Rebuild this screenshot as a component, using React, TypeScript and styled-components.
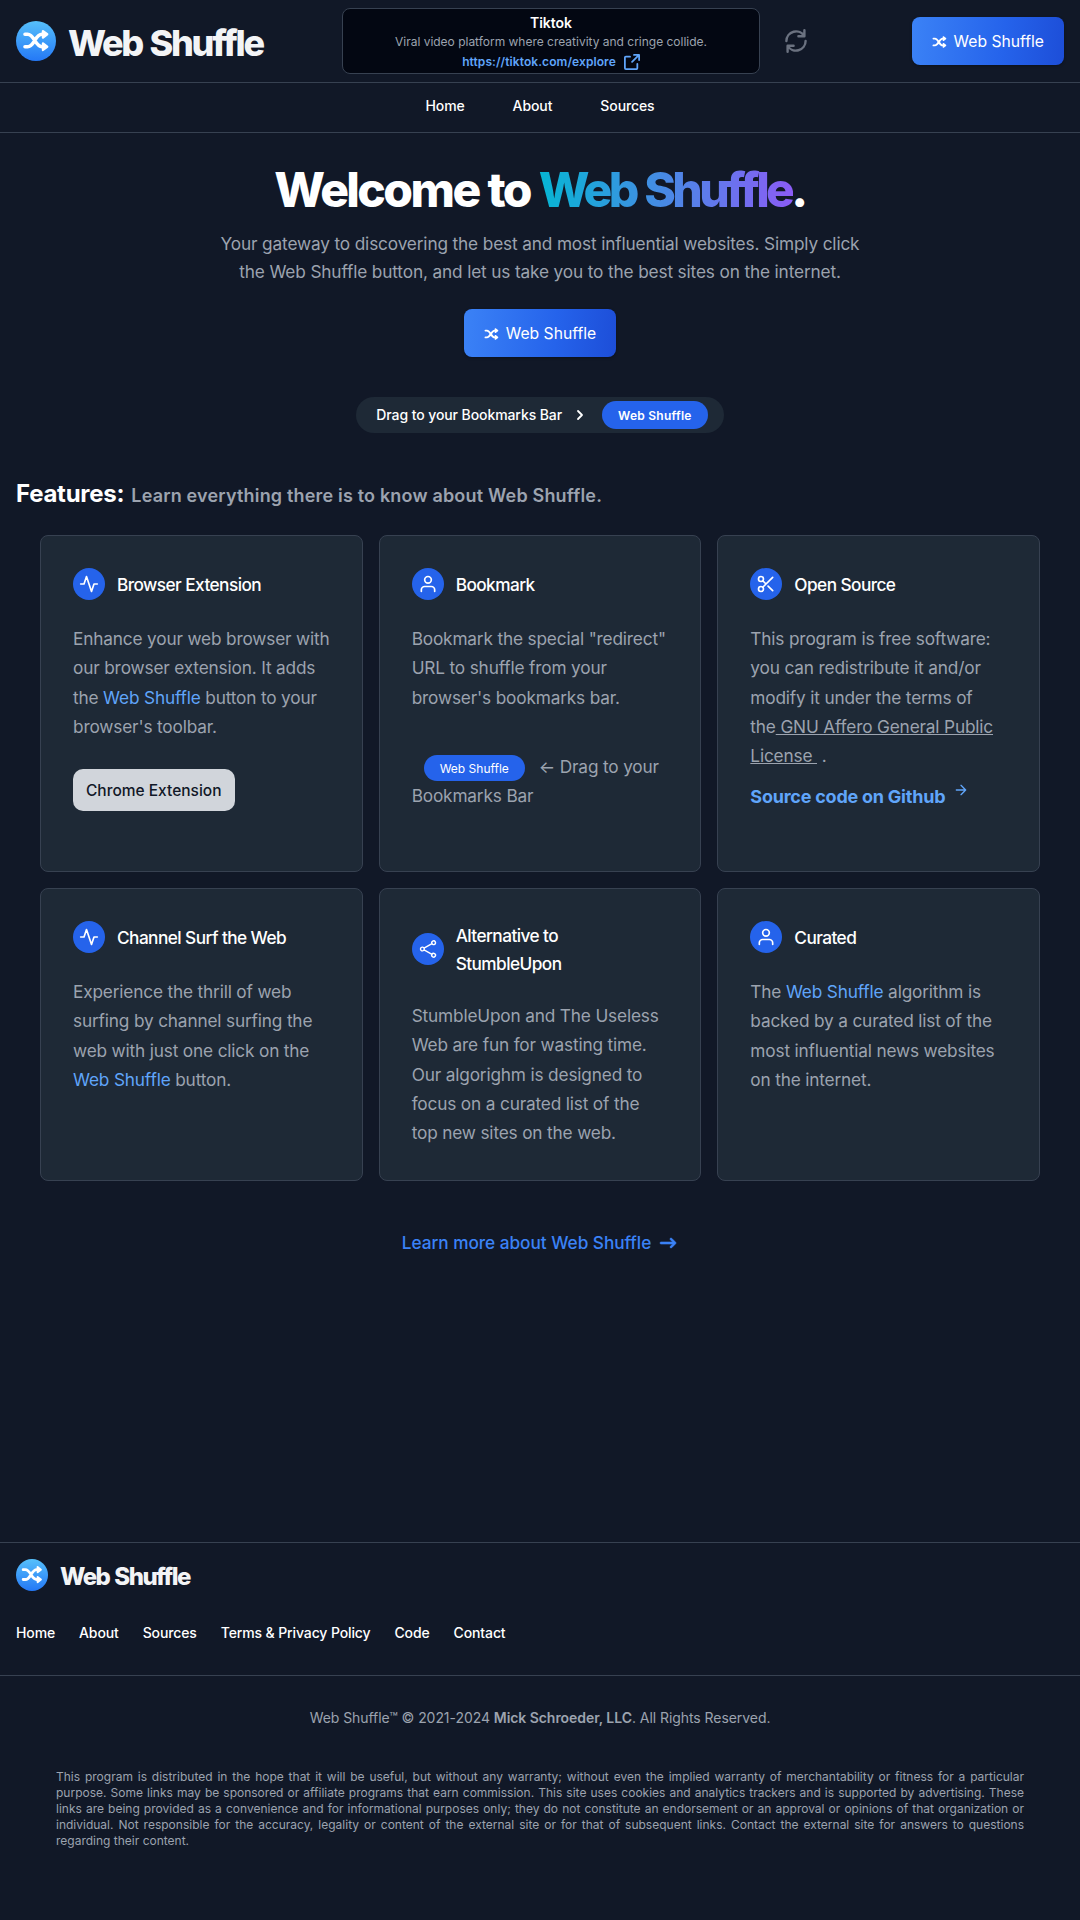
import React from "react";
import styled, { createGlobalStyle } from "styled-components";

const GlobalStyle = createGlobalStyle`
  *, *::before, *::after { box-sizing: border-box; }
  body {
    margin: 0;
    background: #111827;
    color: #fff;
    font-family: Inter, "Noto Sans", "Liberation Sans", sans-serif;
    font-size: 16px;
    line-height: 24px;
  }
  h1, h2, h3, p { margin: 0; }
  a { color: inherit; text-decoration: none; }
  svg { display: block; flex: none; }
`;

const Page = styled.div`
  display: flex;
  flex-direction: column;
  min-height: 1920px;
`;

const Header = styled.header`
  display: grid;
  grid-template-columns: 326px 1fr auto;
  align-items: center;
  height: 83px;
  padding: 0 16px;
  border-bottom: 1px solid #374151;
`;

const Brand = styled.a<{ $small?: boolean }>`
  display: flex;
  align-items: center;
  gap: 12px;
  font-size: ${(p) => (p.$small ? 24 : 36)}px;
  line-height: ${(p) => (p.$small ? 32 : 40)}px;
  font-weight: 800;
  letter-spacing: -0.064em;
  word-spacing: 0.055em;
  color: #f3f4f6;
`;

const BrandName = styled.span`
  padding-top: 2px;
  margin-bottom: -2px;
`;

const Sponsor = styled.div`
  display: flex;
  align-items: center;
  gap: 25px;
  color: #6b7280;
`;

const SponsorBox = styled.div`
  display: flex;
  flex-direction: column;
  align-items: center;
  width: 418px;
  height: 66px;
  padding-top: 5px;
  border: 1px solid #374151;
  border-radius: 8px;
  background: #030712;
`;

const SponsorTitle = styled.div`
  font-size: 14px;
  line-height: 18px;
  font-weight: 600;
  color: #fff;
`;

const SponsorText = styled.div`
  font-size: 12px;
  line-height: 19px;
  letter-spacing: -0.01px;
  color: #9ca3af;
`;

const SponsorLink = styled.a`
  display: flex;
  align-items: center;
  gap: 8px;
  font-size: 12px;
  line-height: 21px;
  font-weight: 600;
  letter-spacing: 0.08px;
  color: #60a5fa;
`;

const ShuffleButton = styled.a`
  display: inline-flex;
  align-items: center;
  gap: 7px;
  height: 48px;
  padding: 1px 20px 0;
  border-radius: 8px;
  background: linear-gradient(95deg, #3b82f6, #2563eb 60%, #1d4ed8);
  box-shadow: 0 1px 3px rgba(0, 0, 0, 0.3);
  font-size: 15.7px;
  color: #fff;
`;

const Nav = styled.nav`
  display: flex;
  justify-content: center;
  gap: 48px;
  height: 50px;
  padding-top: 13px;
  border-bottom: 1px solid #374151;
  font-size: 14px;
  line-height: 20px;
  font-weight: 500;
  letter-spacing: -0.1px;
`;

const Hero = styled.section`
  display: flex;
  flex-direction: column;
  align-items: center;
  padding-top: 33px;
  text-align: center;
`;

const HeroTitle = styled.h1`
  font-size: 48px;
  line-height: 48px;
  font-weight: 800;
  letter-spacing: -0.054em;
  word-spacing: 0.02em;
`;

const GradientText = styled.span`
  margin-right: -2px;
  padding-right: 2px;
  letter-spacing: -0.075em;
  word-spacing: 0.03em;
  color: transparent;
  background: linear-gradient(to right, #06b6d4, #8b5cf6);
  background-clip: text;
  -webkit-background-clip: text;
`;

const HeroText = styled.p`
  width: 660px;
  margin: 16px 0 23px;
  font-size: 17.25px;
  line-height: 28px;
  letter-spacing: -0.15px;
  color: #9ca3af;
`;

const BookmarkBar = styled.div`
  display: flex;
  align-items: center;
  height: 36px;
  margin-top: 40px;
  padding: 0 16px 0 20px;
  border-radius: 18px;
  background: #1e2936;
  font-size: 14px;
  font-weight: 500;
  letter-spacing: -0.09px;
  white-space: nowrap;
`;

const BarChevron = styled.span`
  display: flex;
  margin: 0 16px 0 12px;
`;

const Pill = styled.a<{ $inline?: boolean }>`
  display: inline-block;
  padding: ${(p) => (p.$inline ? "5px 16px 4px" : "7px 16px 5px")};
  margin: ${(p) => (p.$inline ? "0 14px 0 12px" : "0")};
  border-radius: 16px;
  background: #2563eb;
  font-size: 12px;
  line-height: ${(p) => (p.$inline ? 17 : 16)}px;
  font-weight: ${(p) => (p.$inline ? 400 : 600)};
  letter-spacing: ${(p) => (p.$inline ? 0 : 0.26)}px;
  color: #fff;
`;

const FeaturesHeading = styled.h2`
  display: flex;
  align-items: baseline;
  gap: 7px;
  height: 32px;
  margin: 45px 16px 25px;
  font-size: 24px;
  line-height: 32px;
  font-weight: 700;
  letter-spacing: -0.25px;
`;

const FeaturesNote = styled.span`
  font-size: 18px;
  line-height: 24px;
  font-weight: 600;
  letter-spacing: 0.18px;
  color: #9ca3af;
`;

const CardGrid = styled.section`
  display: grid;
  grid-template-columns: repeat(3, 1fr);
  grid-template-rows: 337px 293px;
  gap: 16px;
  padding: 0 40px;
`;

const Card = styled.article`
  padding: 32px;
  border: 1px solid #374151;
  border-radius: 8px;
  background: #1e2936;
`;

const CardHead = styled.div`
  display: flex;
  align-items: center;
  gap: 12px;
  min-height: 32px;
  margin-bottom: 24px;
`;

const CardBadge = styled.span`
  display: flex;
  align-items: center;
  justify-content: center;
  flex: none;
  width: 32px;
  height: 32px;
  border-radius: 50%;
  background: #2563eb;
`;

const CardTitle = styled.h3`
  padding-top: 1px;
  margin-bottom: -1px;
  font-size: 17.25px;
  line-height: 28px;
  font-weight: 500;
  letter-spacing: -0.033em;
`;

const CardText = styled.p<{ $top?: number }>`
  margin-top: ${(p) => p.$top ?? 0}px;
  font-size: 17.25px;
  line-height: 29.25px;
  letter-spacing: -0.17px;
  color: #9ca3af;
`;

const InlineLink = styled.a`
  color: #60a5fa;
`;

const LicenseLink = styled.a`
  text-decoration: underline;
`;

const ChromeButton = styled.a`
  display: inline-flex;
  align-items: center;
  height: 42px;
  margin-top: 28px;
  padding: 1px 13px 0;
  border-radius: 10px;
  background: #d1d5db;
  font-size: 15.5px;
  font-weight: 500;
  color: #111827;
`;

const SourceLink = styled.a`
  display: flex;
  align-items: flex-start;
  gap: 8px;
  margin-top: 12px;
  font-size: 18px;
  line-height: 29px;
  font-weight: 700;
  letter-spacing: -0.23px;
  color: #60a5fa;
`;

const LearnMore = styled.a`
  display: flex;
  align-items: center;
  align-self: center;
  gap: 7px;
  margin-top: 48px;
  font-size: 17.25px;
  line-height: 28px;
  font-weight: 500;
  letter-spacing: -0.05px;
  color: #3b82f6;
`;

const Footer = styled.footer`
  margin-top: auto;
  height: 378px;
  border-top: 1px solid #374151;
`;

const FooterTop = styled.div`
  display: flex;
  flex-direction: column;
  gap: 32px;
  height: 133px;
  padding: 16px;
  border-bottom: 1px solid #374151;
`;

const FooterNav = styled.nav`
  display: flex;
  gap: 24px;
  font-size: 14px;
  line-height: 20px;
  font-weight: 500;
  letter-spacing: -0.12px;
`;

const Copyright = styled.p`
  margin-top: 32px;
  font-size: 14px;
  line-height: 20px;
  letter-spacing: -0.06px;
  text-align: center;
  color: #9ca3af;
`;

const Strong = styled.b`
  font-weight: 600;
`;

const Disclaimer = styled.p`
  margin: 41px 56px 0;
  font-size: 12px;
  line-height: 16px;
  text-align: justify;
  color: #9ca3af;
`;

function ShuffleGlyph() {
  return (
    <g fill="none" stroke="#fff" strokeWidth="3.6" strokeLinecap="round" strokeLinejoin="round">
      <path d="M2 4.8h2.6C11.4 4.8 12 17.2 19 17.2h2M2 17.2h2.6C11.4 17.2 12 4.8 19 4.8h2" />
      <path d="M20 1.6l4.2 3.2L20 8zM20 14l4.2 3.2L20 20.4z" fill="#fff" strokeWidth="2.4" />
    </g>
  );
}

function Logo({ size }: { size: number }) {
  return (
    <svg width={size} height={size} viewBox="0 0 40 40">
      <defs>
        <linearGradient id={`logo${size}`} x1="0" y1="0" x2="0" y2="1">
          <stop offset="0" stopColor="#56c0fb" />
          <stop offset="1" stopColor="#2478f6" />
        </linearGradient>
      </defs>
      <circle cx="20" cy="20" r="20" fill={`url(#logo${size})`} />
      <g transform="translate(7 8.5)">
        <ShuffleGlyph />
      </g>
    </svg>
  );
}

function ShuffleAction() {
  return (
    <ShuffleButton href="#">
      <svg width="15" height="12" viewBox="0 0 26 22">
        <ShuffleGlyph />
      </svg>
      Web Shuffle
    </ShuffleButton>
  );
}

const outline = {
  fill: "none",
  stroke: "currentColor",
  strokeLinecap: "round" as const,
  strokeLinejoin: "round" as const,
};

const RefreshIcon = () => (
  <svg width="22" height="24" viewBox="0 0 18 20" {...outline} strokeWidth="2">
    <path d="M16 1v5h-5M2 19v-5h5m10-4a8 8 0 0 1-14.947 3.97M1 10a8 8 0 0 1 14.947-3.97" />
  </svg>
);

const ExternalIcon = () => (
  <svg width="16" height="16" viewBox="0 0 18 18" {...outline} strokeWidth="2">
    <path d="M15 11v4.833A1.166 1.166 0 0 1 13.833 17H2.167A1.167 1.167 0 0 1 1 15.833V4.167A1.166 1.166 0 0 1 2.167 3h4.618m4.447-2H17v5.768M9.111 8.889l7.778-7.778" />
  </svg>
);

const badgePaths: Record<string, React.ReactNode> = {
  pulse: <path d="M22 12h-4l-3 9L9 3l-3 9H2" />,
  user: (
    <>
      <path d="M20 21v-2a4 4 0 0 0-4-4H8a4 4 0 0 0-4 4v2" />
      <circle cx="12" cy="7" r="4" />
    </>
  ),
  scissors: (
    <>
      <circle cx="6" cy="6" r="3" />
      <circle cx="6" cy="18" r="3" />
      <path d="M20 4L8.12 15.88M14.47 14.48L20 20M8.12 8.12L12 12" />
    </>
  ),
  share: (
    <path
      strokeWidth="1.7"
      d="M7.217 10.907a2.25 2.25 0 1 0 0 2.186m0-2.186c.18.324.283.696.283 1.093s-.103.77-.283 1.093m0-2.186 9.566-5.314m-9.566 7.5 9.566 5.314m0 0a2.25 2.25 0 1 0 3.935 2.186 2.25 2.25 0 0 0-3.935-2.186Zm0-12.814a2.25 2.25 0 1 0 3.933-2.185 2.25 2.25 0 0 0-3.933 2.185Z"
    />
  ),
};

function Feature({ icon, title, children }: { icon: string; title: React.ReactNode; children: React.ReactNode }) {
  return (
    <Card>
      <CardHead>
        <CardBadge>
          <svg width="20" height="20" viewBox="0 0 24 24" {...outline} strokeWidth="2">
            {badgePaths[icon]}
          </svg>
        </CardBadge>
        <CardTitle>{title}</CardTitle>
      </CardHead>
      {children}
    </Card>
  );
}

export default function App() {
  return (
    <Page>
      <GlobalStyle />
      <Header>
        <Brand href="#">
          <Logo size={40} />
          <BrandName>Web Shuffle</BrandName>
        </Brand>
        <Sponsor>
          <SponsorBox>
            <SponsorTitle>Tiktok</SponsorTitle>
            <SponsorText>Viral video platform where creativity and cringe collide.</SponsorText>
            <SponsorLink href="#">
              https://tiktok.com/explore
              <ExternalIcon />
            </SponsorLink>
          </SponsorBox>
          <RefreshIcon />
        </Sponsor>
        <ShuffleAction />
      </Header>
      <Nav>
        <a href="#">Home</a>
        <a href="#">About</a>
        <a href="#">Sources</a>
      </Nav>

      <Hero>
        <HeroTitle>
          Welcome to <GradientText>Web Shuffle</GradientText>.
        </HeroTitle>
        <HeroText>
          Your gateway to discovering the best and most influential websites. Simply click the Web Shuffle button, and
          let us take you to the best sites on the internet.
        </HeroText>
        <ShuffleAction />
        <BookmarkBar>
          Drag to your Bookmarks Bar
          <BarChevron>
            <svg width="12" height="12" viewBox="0 0 12 12" {...outline} strokeWidth="1.8">
              <path d="M4 2l4 4-4 4" />
            </svg>
          </BarChevron>
          <Pill href="#">Web Shuffle</Pill>
        </BookmarkBar>
      </Hero>

      <FeaturesHeading>
        Features:
        <FeaturesNote>Learn everything there is to know about Web Shuffle.</FeaturesNote>
      </FeaturesHeading>

      <CardGrid>
        <Feature icon="pulse" title="Browser Extension">
          <CardText>
            Enhance your web browser with our browser extension. It adds the <InlineLink href="#">Web Shuffle</InlineLink>{" "}
            button to your browser's toolbar.
          </CardText>
          <ChromeButton href="#">Chrome Extension</ChromeButton>
        </Feature>
        <Feature icon="user" title="Bookmark">
          <CardText>Bookmark the special "redirect" URL to shuffle from your browser's bookmarks bar.</CardText>
          <CardText $top={40}>
            <Pill href="#" $inline>
              Web Shuffle
            </Pill>
            ← Drag to your Bookmarks Bar
          </CardText>
        </Feature>
        <Feature icon="scissors" title="Open Source">
          <CardText>
            This program is free software: you can redistribute it and/or modify it under the terms of the
            <LicenseLink href="#">{"\u00a0GNU Affero General Public License\u00a0"}</LicenseLink> .
          </CardText>
          <SourceLink href="#">
            Source code on Github
            <svg width="16" height="16" viewBox="0 0 24 24" {...outline} strokeWidth="2">
              <path d="M5 12h14M12 5l7 7-7 7" />
            </svg>
          </SourceLink>
        </Feature>
        <Feature icon="pulse" title="Channel Surf the Web">
          <CardText>
            Experience the thrill of web surfing by channel surfing the web with just one click on the{" "}
            <InlineLink href="#">Web Shuffle</InlineLink> button.
          </CardText>
        </Feature>
        <Feature
          icon="share"
          title={
            <>
              Alternative to
              <br />
              StumbleUpon
            </>
          }
        >
          <CardText>
            StumbleUpon and The Useless Web are fun for wasting time. Our algorighm is designed to focus on a curated
            list of the top new sites on the web.
          </CardText>
        </Feature>
        <Feature icon="user" title="Curated">
          <CardText>
            The <InlineLink href="#">Web Shuffle</InlineLink> algorithm is backed by a curated list of the most
            influential news websites on the internet.
          </CardText>
        </Feature>
      </CardGrid>

      <LearnMore href="#">
        Learn more about Web Shuffle
        <svg width="20" height="20" viewBox="0 0 20 20" fill="currentColor" stroke="currentColor" strokeWidth="0.6">
          <path
            fillRule="evenodd"
            d="M12.293 5.293a1 1 0 011.414 0l4 4a1 1 0 010 1.414l-4 4a1 1 0 01-1.414-1.414L14.586 11H3a1 1 0 110-2h11.586l-2.293-2.293a1 1 0 010-1.414z"
          />
        </svg>
      </LearnMore>

      <Footer>
        <FooterTop>
          <Brand href="#" $small>
            <Logo size={32} />
            <BrandName>Web Shuffle</BrandName>
          </Brand>
          <FooterNav>
            <a href="#">Home</a>
            <a href="#">About</a>
            <a href="#">Sources</a>
            <a href="#">Terms &amp; Privacy Policy</a>
            <a href="#">Code</a>
            <a href="#">Contact</a>
          </FooterNav>
        </FooterTop>
        <Copyright>
          Web Shuffle™ © 2021-2024 <Strong>Mick Schroeder, LLC</Strong>. All Rights Reserved.
        </Copyright>
        <Disclaimer>
          This program is distributed in the hope that it will be useful, but without any warranty; without even the
          implied warranty of merchantability or fitness for a particular purpose. Some links may be sponsored or
          affiliate programs that earn commission. This site uses cookies and analytics trackers and is supported by
          advertising. These links are being provided as a convenience and for informational purposes only; they do not
          constitute an endorsement or an approval or opinions of that organization or individual. Not responsible for
          the accuracy, legality or content of the external site or for that of subsequent links. Contact the external
          site for answers to questions regarding their content.
        </Disclaimer>
      </Footer>
    </Page>
  );
}
